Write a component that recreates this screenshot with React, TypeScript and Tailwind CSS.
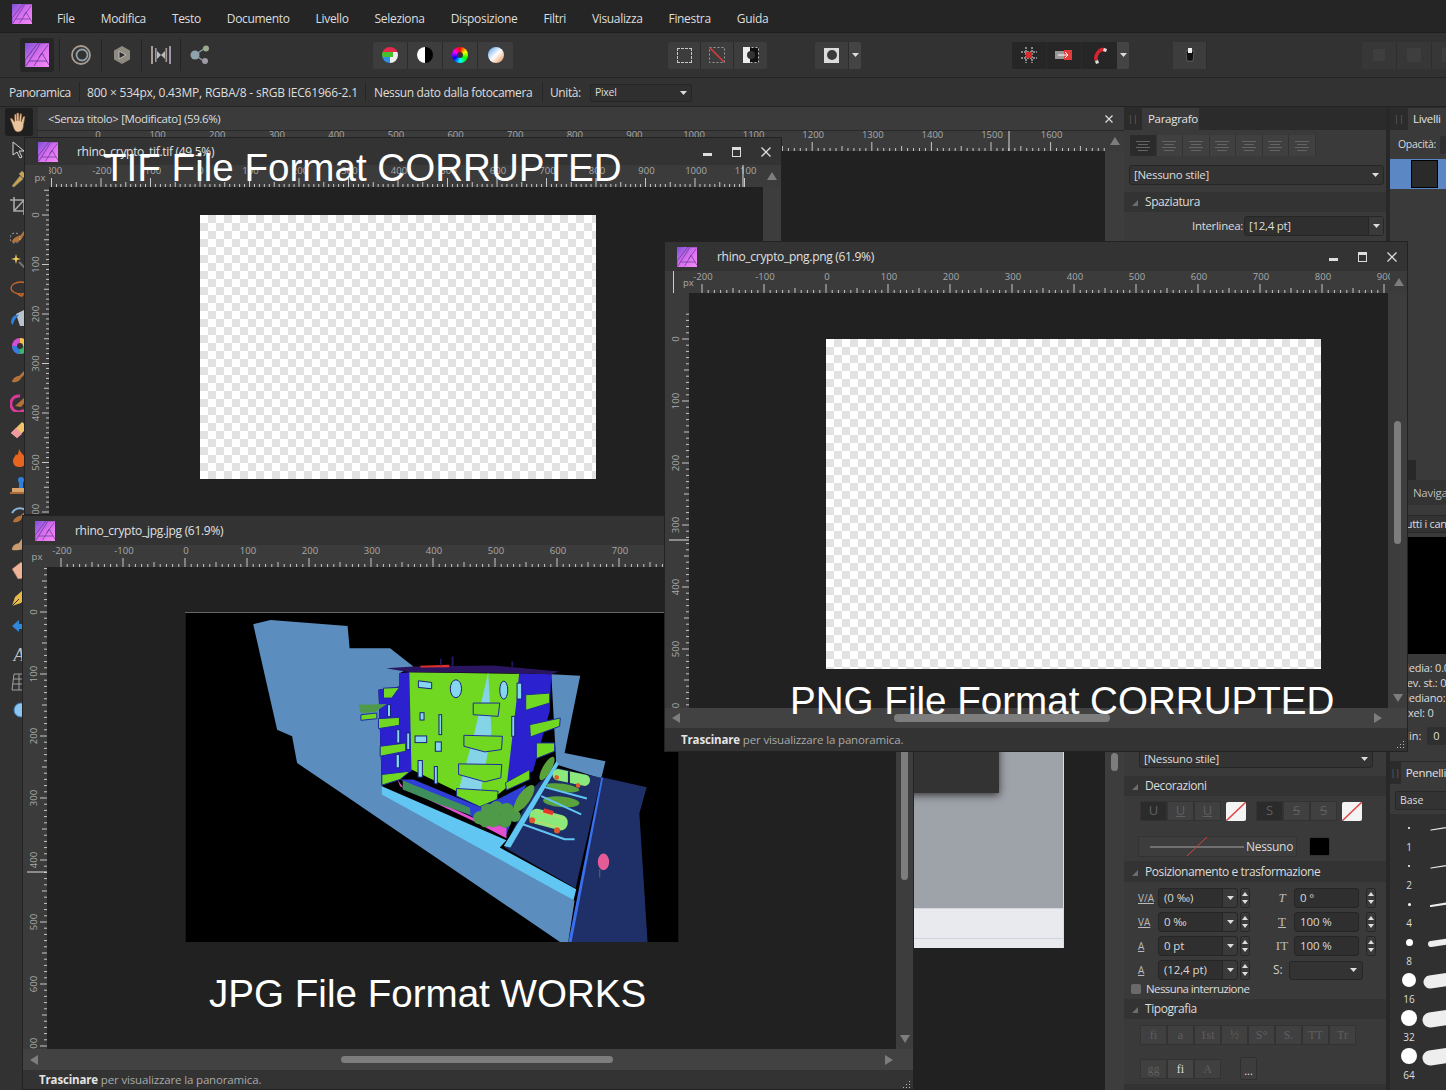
import React from "react";

const menus = ["File", "Modifica", "Testo", "Documento", "Livello", "Seleziona", "Disposizione", "Filtri", "Visualizza", "Finestra", "Guida"];

const Logo = ({ size = 20 }: { size?: number }) => (
  <svg width={size} height={size} viewBox="0 0 24 24">
    <defs>
      <linearGradient id="lg" x1="0" y1="0" x2="1" y2="1">
        <stop offset="0" stopColor="#7b4fd6" />
        <stop offset="0.5" stopColor="#d96ef0" />
        <stop offset="1" stopColor="#f58af7" />
      </linearGradient>
    </defs>
    <rect width="24" height="24" fill="url(#lg)" />
    <path d="M24 0L13 0L0 17V24M1 23L15 1M9 23L17 10L24 22M4 18H22M23 2L14 14" stroke="#4a3080" strokeWidth="0.7" fill="none" />
  </svg>
);

type RulerProps = { size: number; origin: number; zero: number; step: number; from: number; to: number; cursor?: number };

const HRuler = ({ size, origin, zero, step, from, to, cursor }: RulerProps) => {
  const ticks = [];
  for (let v = from; v <= to; v += 10) {
    const x = zero - origin + (v / 100) * step;
    const len = v % 100 === 0 ? 9 : v % 50 === 0 ? 5 : 3;
    ticks.push(<line key={v} x1={x} x2={x} y1={22 - len} y2={22} stroke="#c8c8c8" strokeWidth="1" />);
    if (v % 100 === 0)
      ticks.push(
        <text key={"t" + v} x={x + 1} y={9} fontSize="9.5" fill="#aaa" textAnchor="middle">
          {v}
        </text>
      );
  }
  return (
    <svg width={size} height={22} className="block shrink-0">
      {ticks}
      {cursor !== undefined && <line x1={cursor - origin} x2={cursor - origin} y1={0} y2={22} stroke="#ddd" />}
    </svg>
  );
};

const VRuler = ({ size, origin, zero, step, from, to, cursor }: RulerProps) => {
  const ticks = [];
  for (let v = from; v <= to; v += 10) {
    const y = zero - origin + (v / 100) * step;
    const len = v % 100 === 0 ? 7 : v % 50 === 0 ? 5 : 3;
    ticks.push(<line key={v} y1={y} y2={y} x1={24 - len} x2={24} stroke="#c8c8c8" strokeWidth="1" />);
    if (v % 100 === 0)
      ticks.push(
        <text key={"t" + v} x={0} y={0} transform={`translate(14 ${y}) rotate(-90)`} fontSize="9.5" fill="#aaa" textAnchor="middle">
          {v}
        </text>
      );
  }
  return (
    <svg width={24} height={size} className="block shrink-0">
      {ticks}
      {cursor !== undefined && <line y1={cursor - origin} y2={cursor - origin} x1={4} x2={24} stroke="#ddd" />}
    </svg>
  );
};

const Tri = ({ dir, className = "" }: { dir: "up" | "down" | "left" | "right"; className?: string }) => {
  const pts = { up: "5,1 10,9 0,9", down: "0,1 10,1 5,9", left: "1,5 9,0 9,10", right: "9,5 1,0 1,10" }[dir];
  return (
    <svg width={10} height={10} viewBox="0 0 10 10" className={"shrink-0 " + className}>
      <polygon points={pts} fill="#7d7d7d" />
    </svg>
  );
};

const Caret = () => (
  <svg width={7} height={4} viewBox="0 0 7 4" className="shrink-0">
    <polygon points="0,0 7,0 3.5,4" fill="#ddd" />
  </svg>
);

const WinButtons = () => (
  <div className="flex items-center gap-[20px] ml-auto pr-[10px]">
    <div className="w-[9px] h-[3px] mt-[5px] bg-[#ddd]" />
    <div className="w-[9px] h-[10px] border border-[#ddd] border-t-[3px]" />
    <svg width={10} height={10} viewBox="0 0 10 10">
      <path d="M0.5 0.5L9.5 9.5M9.5 0.5L0.5 9.5" stroke="#ddd" strokeWidth="1.3" />
    </svg>
  </div>
);

const Grip = () => (
  <svg width={9} height={9} viewBox="0 0 9 9" className="shrink-0">
    {[[7, 1], [4, 4], [7, 4], [1, 7], [4, 7], [7, 7]].map(([x, y]) => (
      <rect key={`${x}${y}`} x={x} y={y} width="1" height="1" fill="#bbb" />
    ))}
  </svg>
);

const Checker = ({ className }: { className: string }) => (
  <div className={"shrink-0 bg-[conic-gradient(#e2e2e2_25%,#ffffff_0_50%,#e2e2e2_0_75%,#ffffff_0)] bg-[length:16px_16px] " + className} />
);

const Status = ({ className }: { className: string }) => (
  <div className={"flex items-center shrink-0 bg-[#333333] text-[11.5px] text-[#a9a9a9] tracking-[-0.15px] " + className}>
    <span>
      <b className="font-bold text-[#e4e4e4]">Trascinare</b> per visualizzare la panoramica.
    </span>
    <div className="ml-auto mr-[2px] mt-[10px]">
      <Grip />
    </div>
  </div>
);

const bush = [
  [720, 610, 20], [745, 590, 22], [770, 580, 20], [800, 590, 24], [825, 605, 18], [760, 615, 24], [795, 620, 20], [735, 625, 14],
];

const Building = () => (
  <svg viewBox="-165 -6 1482 990" className="block w-full h-full">
    <rect x="-165" y="-6" width="1482" height="990" fill="#000" />
    <polygon points="38,28 90,15 322,33 328,100 450,100 520,155 478,175 478,215 415,225 425,515 1005,860 985,990 970,990 310,540 170,445 155,365 110,345" fill="#5b8ebf" />
    <polygon points="935,178 1022,183 975,415 1098,440 1085,492 950,450" fill="#5b8ebf" />
    <polygon points="1088,488 1222,518 1200,597 1225,990 992,990" fill="#1f3069" />
    <polygon points="950,460 1085,490 1008,822 795,700 880,520" fill="#1e2f68" />
    <polygon points="1085,490 1091,490 995,990 985,990" fill="#3a70f0" />
    <polygon points="425,515 800,678 780,700 1010,825 1002,858 425,540" fill="#62c6f2" />
    <polygon points="950,440 957,450 812,700 792,695" fill="#62c6f2" />
    <polygon points="480,495 520,495 725,580 860,510 800,660" fill="#2f3ed4" />
    <polygon points="472,495 490,520 600,565 700,610 800,640 800,672 700,620 480,515" fill="#e24fd0" />
    <polygon points="415,225 478,215 478,175 510,172 515,470 425,510" fill="#2b21cf" />
    <polygon points="835,175 935,178 930,290 880,470 790,510" fill="#2b21cf" />
    <polygon points="508,172 838,177 830,260 800,520 725,580 650,530 514,465" fill="#70d820" />
    <polygon points="745,172 700,370 655,530 720,548 755,350" fill="#85d3e6" />
    <polygon points="438,160 520,155 760,152 958,170 935,178 835,175 508,172" fill="#2a1560" />
    <polygon points="540,153 628,150 628,157 542,158" fill="#e0302a" />
    <rect x="635" y="125" width="6" height="28" fill="#2a1560" />
    <rect x="600" y="132" width="5" height="20" fill="#2a1560" />
    <rect x="815" y="140" width="5" height="15" fill="#2a1560" />
    <g fill="#70d820" stroke="#1f2aa0" strokeWidth="3">
      <polygon points="700,265 780,265 775,305 700,300" />
      <polygon points="672,362 788,365 785,405 735,412 672,395" />
      <polygon points="656,448 786,450 783,490 735,502 656,480" />
      <polygon points="650,522 775,530 772,555 720,577 650,545" />
      <polygon points="858,240 930,235 930,265 858,287" />
      <polygon points="870,330 962,310 960,335 872,367" />
      <polygon points="890,385 945,385 945,410 890,432" />
      <polygon points="797,505 870,465 870,495 800,527" />
      <polygon points="430,220 478,218 455,250 430,250" />
      <polygon points="362,300 410,295 410,312 362,317" />
      <polygon points="415,312 478,308 478,332 415,342" />
      <polygon points="420,395 497,385 497,410 420,425" />
      <polygon points="425,480 510,470 480,495 425,512" />
    </g>
    <polygon points="355,270 440,268 405,292 362,296" fill="#4f9a48" />
    <g fill="#86d6f0" stroke="#1b1f80" strokeWidth="3">
      <polygon points="535,198 575,203 575,222 535,218" />
      <ellipse cx="648" cy="222" rx="17" ry="27" />
      <ellipse cx="792" cy="226" rx="12" ry="27" />
      <rect x="540" y="294" width="12" height="22" />
      <rect x="597" y="300" width="8" height="60" />
      <rect x="525" y="364" width="35" height="20" />
      <rect x="586" y="382" width="18" height="28" />
      <rect x="534" y="438" width="13" height="50" />
      <rect x="583" y="456" width="9" height="52" />
      <rect x="832" y="205" width="14" height="48" />
      <rect x="816" y="305" width="9" height="60" />
      <rect x="442" y="270" width="9" height="36" />
      <rect x="470" y="345" width="9" height="40" />
      <rect x="500" y="355" width="9" height="50" />
      <rect x="468" y="420" width="10" height="40" />
    </g>
    <polygon points="488,498 690,580 692,602 600,570 488,525" fill="#3f8f5c" />
    <g fill="#4f9a48">
      {bush.map(([x, y, r]) => (
        <circle key={`${x}${y}`} cx={x} cy={y} r={r} />
      ))}
    </g>
    <ellipse cx="853" cy="552" rx="18" ry="48" transform="rotate(35 853 552)" fill="#5aa33c" />
    <ellipse cx="922" cy="462" rx="13" ry="40" transform="rotate(30 922 462)" fill="#5aa33c" />
    <ellipse cx="970" cy="520" rx="50" ry="12" transform="rotate(8 970 520)" fill="#5aa33c" />
    <ellipse cx="965" cy="562" rx="55" ry="16" transform="rotate(5 965 562)" fill="#5aa33c" />
    <g stroke="#62c6f2" strokeWidth="6" fill="none">
      <path d="M845 628L975 675H1005" />
      <path d="M905 545L1025 600" />
      <path d="M915 518L1042 552" />
    </g>
    <g transform="rotate(15 925 615)">
      <rect x="868" y="592" width="118" height="46" rx="22" fill="#8be87a" />
      <rect x="905" y="586" width="30" height="14" fill="#e0382c" />
      <path d="M880 600H975M880 630H975" stroke="#e8d060" strokeWidth="2" />
      <circle cx="880" cy="630" r="9" fill="#e05a2c" />
      <circle cx="960" cy="640" r="9" fill="#e05a2c" />
    </g>
    <g transform="rotate(12 995 490)">
      <rect x="938" y="472" width="114" height="34" rx="16" fill="#8be87a" />
      <circle cx="952" cy="498" r="7" fill="#e05a2c" />
      <circle cx="1020" cy="508" r="7" fill="#e05a2c" />
    </g>
    <rect x="985" y="470" width="6" height="36" fill="#1a2060" />
    <ellipse cx="1092" cy="743" rx="17" ry="25" fill="#e45c96" />
    <rect x="1080" y="765" width="2" height="25" fill="#596" />
  </svg>
);

type WinProps = { title: string; className: string; logo: number; logoClass: string; buttons?: boolean; titleH: string; children: React.ReactNode };

const DocWindow = ({ title, className, logo, logoClass, buttons, titleH, children }: WinProps) => (
  <div className={"absolute flex flex-col bg-[#3b3b3b] border border-[#222] overflow-hidden " + className}>
    <div className={"flex items-center shrink-0 bg-[#333333] text-[12px] text-[#e0e0e0] tracking-[-0.3px] " + titleH}>
      <div className={logoClass}>
        <Logo size={logo} />
      </div>
      <span>{title}</span>
      {buttons && <WinButtons />}
    </div>
    {children}
  </div>
);

const ToolIcon = ({ children }: { children: React.ReactNode }) => (
  <div className="flex items-center justify-center h-[28px] shrink-0">
    <svg width={18} height={20} viewBox="0 0 18 20">
      {children}
    </svg>
  </div>
);

const tools: React.ReactNode[] = [
  <path key="a" d="M3 2L3 15L7 12L10 18L12 17L9 11H14Z" fill="#2b2b2b" stroke="#d8d8d8" />,
  <path key="b" d="M2 18L10 8L13 11L4 19ZM12 3L16 7L13 10L9 6Z" fill="#c9a24e" stroke="#888" strokeWidth=".5" />,
  <g key="c" stroke="#a8a8a8" strokeWidth="1.6" fill="none"><path d="M4 1V15H18M0 4H14V19M4 15L14 4" /></g>,
  <g key="d"><path d="M2 18C3 13 8 12 10 12L17 3L18 5L12 14C11 17 6 19 2 18Z" fill="#b5713a" /><circle cx="5" cy="14" r="5" fill="none" stroke="#aaa" strokeDasharray="2 2" /></g>,
  <g key="e"><path d="M9 10L18 19" stroke="#777" strokeWidth="2" /><path d="M6 2L7 6L11 7L7 8L6 12L5 8L1 7L5 6Z" fill="#f5cf5a" /></g>,
  <g key="f" stroke="#c9672a" strokeWidth="1.4" fill="none"><ellipse cx="11" cy="8" rx="10" ry="6" /><path d="M8 14C12 18 14 15 12 14" /></g>,
  <g key="g"><path d="M6 6L14 2L18 8V18H10Z" fill="#b8c2cc" /><path d="M1 15C1 9 5 6 9 7L6 10C5 12 3 14 3 17Z" fill="#2f7fd8" /></g>,
  <g key="h"><circle cx="10" cy="10" r="8" fill="#d34fd0" /><path d="M10 10L10 2A8 8 0 0 1 18 10Z" fill="#f2c14a" /><path d="M10 10L18 10A8 8 0 0 1 10 18Z" fill="#3fb56a" /><path d="M10 10L10 18A8 8 0 0 1 2 10Z" fill="#2f7fd8" /><circle cx="10" cy="10" r="3" fill="#333" /></g>,
  <g key="i"><path d="M2 18C3 13 7 12 9 12L14 7L16 9L11 14C10 17 6 19 2 18Z" fill="#b5713a" /><path d="M14 7L18 2L18 6L16 9Z" fill="#d9364a" /></g>,
  <g key="j"><path d="M10 4A8 8 0 1 0 14 18" fill="none" stroke="#d83a9a" strokeWidth="3" /><path d="M5 14L14 6L18 2V7L11 15Z" fill="#b5713a" /></g>,
  <g key="k"><path d="M1 13L12 2L18 7L7 18Z" fill="#f2c26a" /><path d="M1 13L6 8L12 14L7 18Z" fill="#ef9aa0" /></g>,
  <path key="l" d="M9 1C11 6 16 8 16 13C16 17 13 19 9 19C5 19 3 16 3 13C3 10 5 9 6 6C7 8 8 8 9 1Z" fill="#e8651f" />,
  <g key="m"><circle cx="11" cy="4" r="3" fill="#2f7fd8" /><rect x="9" y="6" width="4" height="6" fill="#2f7fd8" /><rect x="2" y="12" width="16" height="4" fill="#d9a36a" /><rect x="0" y="16" width="18" height="2" fill="#a86a3c" /></g>,
  <g key="n"><path d="M2 9C6 2 14 4 16 7" stroke="#8ab4d8" strokeWidth="2" fill="none" /><path d="M3 18C4 13 9 12 10 12L18 5L12 14C11 17 7 19 3 18Z" fill="#b5713a" /></g>,
  <path key="o" d="M2 18C2 13 6 12 9 11L14 4L18 2V14C14 18 8 19 2 18Z" fill="#c89a72" />,
  <path key="p" d="M2 9L11 2L18 8V18L8 19Z" fill="#efb39a" stroke="#7a5a4a" strokeWidth=".5" />,
  <g key="q"><path d="M2 18L5 9L13 2L18 7L11 15Z" fill="#e8b84a" /><path d="M2 18L9 11" stroke="#333" /></g>,
  <path key="r" d="M2 10L9 4V8H18V13H9V16Z" fill="#2f87d8" />,
  <text key="s" x="9" y="17" fontSize="18" textAnchor="middle" fontFamily="Liberation Serif" fontStyle="italic" fill="#c0c0c0">A</text>,
  <path key="t" d="M4 2H14L16 18H2ZM9 2V18M3 7H15M3 12H16" stroke="#a0a0a0" fill="none" />,
  <circle key="u" cx="11" cy="10" r="7" fill="#8cc6f0" stroke="#3e7fb8" />,
];

// width comes in through className, every button sets its own
const ToolbarBtn = ({ children, dark, className = "" }: { children: React.ReactNode; dark?: boolean; className?: string }) => (
  <div className={"flex items-center justify-center shrink-0 h-[27px] border-r border-[#2c2c2c] " + (dark ? "bg-[#262626] " : "bg-[#3d3d3d] ") + className}>{children}</div>
);

const Swatch = () => (
  <svg width={20} height={19} viewBox="0 0 20 19" className="shrink-0 rounded-[2px]">
    <rect width="20" height="19" fill="#f4f4f4" />
    <path d="M0 19L20 0" stroke="#e24a4a" strokeWidth="1.6" />
  </svg>
);

const SectionHead = ({ title, className = "" }: { title: string; className?: string }) => (
  <div className={"flex items-center bg-[#333333] pl-[8px] gap-[7px] text-[12px] text-[#dcdcdc] tracking-[-0.42px] " + className}>
    <svg width={6} height={6} viewBox="0 0 6 6" className="mt-[2px]">
      <polygon points="6,0 6,6 0,6" fill="#6d6d6d" />
    </svg>
    <span>{title}</span>
  </div>
);

const FieldBtn = ({ label, wide }: { label: string; wide?: boolean }) => (
  <div className={"flex items-center h-[20px] rounded-[3px] bg-[#2f2f2f] border border-[#262626] text-[11.5px] text-[#d8d8d8] pl-[5px] " + (wide ? "w-[65px]" : "w-[80px]")}>
    <span className="tracking-[-0.1px]">{label}</span>
    {!wide && (
      <div className="ml-auto flex items-center justify-center w-[15px] h-full bg-[#3a3a3a] border-l border-[#262626] rounded-r-[3px]">
        <Caret />
      </div>
    )}
  </div>
);

const Stepper = () => (
  <svg width={10} height={20} viewBox="0 0 10 20" className="shrink-0">
    <rect x="0.5" y="0.5" width="9" height="19" rx="2" fill="#3a3a3a" stroke="#262626" />
    <polygon points="5,4 8,8 2,8" fill="#ddd" />
    <polygon points="5,16 8,12 2,12" fill="#ddd" />
  </svg>
);

const FaintBtn = ({ label, active, dark }: { label: string; active?: boolean; dark?: boolean }) => (
  <div
    className={
      "flex items-center justify-center w-[27px] h-[20px] border border-[#333] font-['Liberation_Serif',serif] text-[12px] " +
      (dark ? "bg-[#2b2b2b] text-[#555] " : active ? "bg-[#444] text-[#ddd] " : "bg-[#404040] text-[#5f5f5f] ")
    }
  >
    {label}
  </div>
);

const rows: [string, string, string, string, string][] = [
  ["V/A", "(0 ‰)", "T", "0 °", "italic"],
  ["VA", "0 ‰", "T", "100 %", "underline"],
  ["A", "0 pt", "IT", "100 %", "not-italic"],
];

const brushes = [
  { n: "1", s: 1.2, x: 10, dot: "w-[2px] h-[2px]" },
  { n: "2", s: 1.2, x: 10, dot: "w-[2px] h-[2px]" },
  { n: "4", s: 2.2, x: 10, dot: "w-[3px] h-[3px]" },
  { n: "8", s: 6, x: 10, dot: "w-[7px] h-[7px]" },
  { n: "16", s: 13, x: 9, dot: "w-[14px] h-[14px]" },
  { n: "32", s: 15, x: 9, dot: "w-[16px] h-[16px]" },
  { n: "64", s: 15, x: 9, dot: "w-[16px] h-[16px]" },
];

export default function App() {
  return (
    <div className="relative w-[1446px] h-[1090px] overflow-hidden bg-[#2e2e2e] font-['Open_Sans',sans-serif] select-none">
      {/* menu */}
      <div className="flex items-center h-[33px] bg-[#252525] border-b border-[#1e1e1e]">
        <div className="ml-[12px] mr-[25px] -mt-[5px]">
          <Logo size={20} />
        </div>
        <div className="flex gap-[26px] mt-[5px] text-[12px] text-[#dedede] tracking-[-0.33px]">
          {menus.map((m) => (
            <span key={m}>{m}</span>
          ))}
        </div>
      </div>

      {/* toolbar */}
      <div className="flex items-center h-[45px] bg-[#323232] border-b border-[#232323] overflow-hidden">
        <div className="flex items-center justify-center shrink-0 ml-[20px] w-[34px] h-[34px] rounded-[3px] bg-[#262626]">
          <Logo size={24} />
        </div>
        <div className="ml-[5px] w-px h-[32px] shrink-0 bg-[#242424]" />
        <div className="flex items-center justify-center shrink-0 w-[41px]">
          <svg width={20} height={20} viewBox="0 0 20 20">
            <circle cx="10" cy="10" r="9" fill="none" stroke="#a89a90" strokeWidth="1.8" />
            <circle cx="11" cy="10" r="5.5" fill="none" stroke="#8fa0a8" strokeWidth="1.8" />
          </svg>
        </div>
        <div className="w-px h-[32px] shrink-0 bg-[#242424]" />
        <div className="flex items-center justify-center shrink-0 w-[39px]">
          <svg width={20} height={20} viewBox="0 0 20 20">
            <polygon points="10,1 18,5.5 18,14.5 10,19 2,14.5 2,5.5" fill="#8e8a80" />
            <polygon points="7,6 14,10 7,14" fill="#2f2f2f" stroke="#bbb" />
          </svg>
        </div>
        <div className="w-px h-[32px] shrink-0 bg-[#242424]" />
        <div className="flex items-center justify-center shrink-0 w-[38px]">
          <svg width={20} height={20} viewBox="0 0 20 20">
            <rect x="0" y="1" width="2" height="18" fill="#a99" />
            <rect x="4" y="3" width="1.6" height="14" fill="#99a" />
            <rect x="14.5" y="3" width="1.6" height="14" fill="#a99" />
            <rect x="18" y="1" width="2" height="18" fill="#99a" />
            <polygon points="6,6 10,10 6,14" fill="#bbb" />
            <polygon points="14,6 10,10 14,14" fill="#bbb" />
          </svg>
        </div>
        <div className="w-px h-[32px] shrink-0 bg-[#242424]" />
        <div className="flex items-center justify-center shrink-0 w-[38px]">
          <svg width={20} height={20} viewBox="0 0 20 20">
            <path d="M5 10L15 3M5 10L15 17" stroke="#8b9a9c" strokeWidth="1.5" />
            <circle cx="5" cy="10" r="4.5" fill="#8fa3ad" />
            <circle cx="16" cy="3.5" r="3" fill="#9aa88c" />
            <circle cx="15" cy="16" r="3" fill="#a09aa4" />
          </svg>
        </div>

        <div className="flex items-center shrink-0 ml-[154px] rounded-[2px] overflow-hidden">
          <ToolbarBtn className="w-[35px]">
            <svg width={16} height={16} viewBox="0 0 16 16">
              <clipPath id="c1"><circle cx="8" cy="8" r="8" /></clipPath>
              <g clipPath="url(#c1)">
                <rect width="16" height="5" fill="#e8294c" />
                <rect y="5" width="11" height="5" fill="#45c12e" />
                <rect x="11" y="5" width="5" height="5" fill="#eee" />
                <rect y="10" width="8" height="6" fill="#2d8fe6" />
                <rect x="8" y="10" width="8" height="6" fill="#eee" />
              </g>
            </svg>
          </ToolbarBtn>
          <ToolbarBtn className="w-[35px]">
            <svg width={16} height={16} viewBox="0 0 16 16">
              <circle cx="8" cy="8" r="8" fill="#000" />
              <path d="M8 0A8 8 0 0 0 8 16Z" fill="#fff" />
            </svg>
          </ToolbarBtn>
          <ToolbarBtn className="w-[35px]">
            <div className="w-[16px] h-[16px] rounded-full bg-[conic-gradient(#ff0000,#ffff00,#00ff00,#00ffff,#0000ff,#ff00ff,#ff0000)] flex items-center justify-center">
              <div className="w-[6px] h-[6px] rounded-full bg-[#333]" />
            </div>
          </ToolbarBtn>
          <ToolbarBtn className="w-[35px] border-r-0">
            <div className="w-[16px] h-[16px] rounded-full bg-[linear-gradient(135deg,#4f9be8,#ffffff_50%,#e88a4a)]" />
          </ToolbarBtn>
        </div>

        <div className="flex items-center shrink-0 ml-[155px] rounded-[2px] overflow-hidden">
          <ToolbarBtn className="w-[33px]">
            <div className="w-[15px] h-[15px] border border-dashed border-[#c8c8c8]" />
          </ToolbarBtn>
          <ToolbarBtn className="w-[33px]">
            <svg width={16} height={16} viewBox="0 0 16 16">
              <rect x="0.5" y="0.5" width="15" height="15" fill="none" stroke="#999" strokeDasharray="2 2" />
              <path d="M1 1L15 15" stroke="#e53a3a" strokeWidth="1.4" />
            </svg>
          </ToolbarBtn>
          <ToolbarBtn className="w-[33px] border-r-0">
            <svg width={16} height={16} viewBox="0 0 16 16">
              <rect x="0.5" y="0.5" width="15" height="15" fill="#111" stroke="#bbb" strokeDasharray="2 2" />
              <rect x="0" y="0" width="7" height="16" fill="#eee" />
              <circle cx="8" cy="8" r="4" fill="#333" />
            </svg>
          </ToolbarBtn>
        </div>

        <div className="flex items-center shrink-0 ml-[48px] rounded-[2px] overflow-hidden">
          <ToolbarBtn className="w-[34px]">
            <div className="flex items-center justify-center w-[15px] h-[15px] bg-[#dcdcdc]">
              <div className="w-[10px] h-[10px] rounded-full bg-[#3a3a3a]" />
            </div>
          </ToolbarBtn>
          <div className="flex items-center justify-center w-[12px] h-[27px] bg-[#444]">
            <Caret />
          </div>
        </div>

        <div className="flex items-center shrink-0 ml-[151px] rounded-[2px] overflow-hidden">
          <ToolbarBtn dark className="w-[35px]">
            <svg width={16} height={16} viewBox="0 0 16 16">
              <path d="M0 5H16M0 11H16M5 0V16M11 0V16" stroke="#888" strokeWidth="2" strokeDasharray="2 1" />
              <rect x="5" y="5" width="6" height="6" fill="#d82c2c" />
            </svg>
          </ToolbarBtn>
          <ToolbarBtn dark className="w-[35px]">
            <svg width={18} height={12} viewBox="0 0 18 12">
              <rect x="0" y="2" width="9" height="8" fill="#999" />
              <rect x="9" y="1" width="8" height="10" fill="#e53a3a" />
              <path d="M3 6H13M10 3L13 6L10 9" stroke="#fff" strokeWidth="1" fill="none" />
            </svg>
          </ToolbarBtn>
          <ToolbarBtn dark className="w-[35px] border-r-0">
            <svg width={18} height={18} viewBox="0 0 18 18">
              <path d="M4 15C1 11 6 3 10 2C14 1 16 3 15 6C13 5 12 5 10 6C8 7 6 11 7 14Z" fill="#d9232f" />
              <path d="M4 15L7 14L8 17L5 18Z" fill="#ddd" />
              <path d="M15 6L12 5L13 2L16 3Z" fill="#ddd" />
            </svg>
          </ToolbarBtn>
          <div className="flex items-center justify-center w-[12px] h-[27px] bg-[#444]">
            <Caret />
          </div>
        </div>

        <ToolbarBtn className="ml-[44px] w-[34px]">
          <svg width={10} height={18} viewBox="0 0 10 18">
            <path d="M1 5H9L8 15H2Z" fill="#111" stroke="#888" strokeWidth=".5" />
            <rect x="3" y="2" width="4" height="5" fill="#eee" />
          </svg>
        </ToolbarBtn>

        <div className="flex items-center shrink-0 ml-[155px] opacity-50">
          <ToolbarBtn className="w-[35px]"><div className="w-[12px] h-[12px] bg-[#4b4b4b]" /></ToolbarBtn>
          <ToolbarBtn className="w-[35px]"><div className="w-[14px] h-[14px] bg-[#4b4b4b]" /></ToolbarBtn>
          <ToolbarBtn className="w-[35px]"><div className="w-[14px] h-[14px] bg-[#4b4b4b]" /></ToolbarBtn>
        </div>
      </div>

      {/* context */}
      <div className="flex items-center h-[29px] bg-[#323232] border-b border-[#232323] text-[12px] text-[#dedede] whitespace-nowrap">
        <span className="ml-[9px] w-[62px] pt-[1px] tracking-[-0.5px]">Panoramica</span>
        <div className="ml-[8px] w-px h-[20px] bg-[#262626]" />
        <span className="ml-[7px] w-[270px] pt-[1px] tracking-[-0.2px]">800 × 534px, 0.43MP, RGBA/8 - sRGB IEC61966-2.1</span>
        <div className="ml-[8px] w-px h-[20px] bg-[#262626]" />
        <span className="ml-[8px] w-[160px] pt-[1px] tracking-[-0.35px]">Nessun dato dalla fotocamera</span>
        <div className="ml-[8px] w-px h-[20px] bg-[#262626]" />
        <span className="ml-[7px] w-[40px] pt-[1px] tracking-[-0.4px]">Unità:</span>
        <div className="flex items-center justify-between w-[102px] h-[18px] mt-[2px] rounded-[2px] bg-[#2f2f2f] border border-[#252525] px-[4px] text-[10.5px] tracking-[-0.3px]">
          <span>Pixel</span>
          <Caret />
        </div>
      </div>

      {/* main */}
      <div className="flex h-[983px]">
        <div className="flex flex-col w-[38px] shrink-0 bg-[#323232]">
          <div className="flex items-center justify-center ml-[5px] w-[28px] h-[28px] rounded-[3px] bg-[#1f1f1f] mt-[1px]">
            <svg width={22} height={22} viewBox="0 0 20 20">
              <path d="M4 12L2 7L3.5 6.5L6 10V3H7.5L8 9V1.8H9.8L10 9L11 2.5H12.5L12 10L14 5H15.5L14 13C14 17 12 19 9 19C6 19 5 15 4 12Z" fill="#eac49c" stroke="#7a5230" strokeWidth=".5" />
            </svg>
          </div>
          {tools.map((t, i) => (
            <ToolIcon key={i}>{t}</ToolIcon>
          ))}
        </div>

        {/* background document */}
        <div className="flex flex-col w-[1086px] shrink-0">
          <div className="flex items-center h-[24px] shrink-0 bg-[#3b3b3b] border-b border-[#282828] text-[11.5px] text-[#dedede] tracking-[-0.36px] pl-[10px] pr-[11px]">
            <span>{"<Senza titolo> [Modificato] (59.6%)"}</span>
            <svg width={8} height={8} viewBox="0 0 8 8" className="ml-auto">
              <path d="M0.5 0.5L7.5 7.5M7.5 0.5L0.5 7.5" stroke="#ddd" strokeWidth="1.2" />
            </svg>
          </div>
          <div className="flex h-[20px] shrink-0 bg-[#3b3b3b] overflow-hidden">
            <div className="-mt-[2px]">
              <HRuler size={1067} origin={38} zero={97} step={59.6} from={-50} to={1690} cursor={1009} />
            </div>
            <div className="flex justify-center pt-[5px] w-[19px]">
              <Tri dir="up" />
            </div>
          </div>
          <div className="flex flex-1 min-h-0">
            <div className="relative flex-1 bg-[#212121] overflow-hidden">
              <div className="ml-[700px] mt-[420px] w-[326px] h-[377px] flex flex-col bg-[#9ea2a9] border-r border-[#d9dce6]">
                <div className="w-[261px] h-[222px] bg-[#333] shadow-[0_2px_8px_#333]" />
                <div className="mt-auto h-[40px] bg-[#e9eaee] border-t border-[#d3d6e0] flex flex-col">
                  <div className="mt-[29px] h-px bg-[#cfd3e2]" />
                </div>
              </div>
            </div>
            <div className="w-[19px] bg-[#3d3d3d] pl-[6px]">
              <div className="w-[7px] h-[18px] mt-[602px] rounded-[4px] bg-[#7d7d7d]" />
            </div>
          </div>
        </div>

        {/* paragraph panel */}
        <div className="flex flex-col w-[262px] shrink-0 bg-[#3a3a3a]">
          <div className="flex items-end h-[23px] bg-[#2b2b2b] shrink-0">
            <div className="flex items-center justify-center w-[18px] h-[22px] text-[#666] text-[9px]">||</div>
            <div className="flex items-center h-[22px] w-[57px] bg-[#3a3a3a] pl-[6px] pb-[1px] text-[11.5px] text-[#e4e4e4] tracking-[-0.3px]">Paragrafo</div>
          </div>
          <div className="flex ml-[6px] mt-[5px]">
            {[0, 1, 2, 3, 4, 5, 6].map((i) => (
              <div key={i} className={"flex flex-col justify-center gap-[2px] items-center w-[26.5px] h-[21px] border-r border-[#333] " + (i === 0 ? "bg-[#2b2b2b]" : "bg-[#404040]")}>
                <div className="w-[14px] h-px bg-[#656565]" />
                <div className="w-[10px] h-px bg-[#656565]" />
                <div className="w-[14px] h-px bg-[#656565]" />
                <div className="w-[10px] h-px bg-[#656565]" />
              </div>
            ))}
          </div>
          <div className="flex items-center justify-between ml-[5px] mt-[9px] w-[255px] h-[20px] rounded-[3px] bg-[#333] border border-[#262626] px-[4px] text-[11.5px] text-[#dcdcdc] tracking-[-0.3px]">
            <span>[Nessuno stile]</span>
            <Caret />
          </div>
          <SectionHead title="Spaziatura" className="mt-[7px] h-[20px]" />
          <div className="flex items-center mt-[4px] text-[11.5px] text-[#dcdcdc] tracking-[-0.3px]">
            <span className="ml-[68px] w-[52px]">Interlinea:</span>
            <div className="flex items-center w-[140px] h-[20px] rounded-[3px] bg-[#2f2f2f] border border-[#262626] pl-[4px]">
              <span>[12,4 pt]</span>
              <div className="ml-auto flex items-center justify-center w-[15px] h-full bg-[#3a3a3a] border-l border-[#262626]">
                <Caret />
              </div>
            </div>
          </div>

          {/* below the floating png window */}
          <div className="flex items-center justify-between ml-[15px] mt-[513px] w-[234px] h-[20px] rounded-[3px] bg-[#333] border border-[#262626] px-[4px] text-[11.5px] text-[#dcdcdc] tracking-[-0.3px]">
            <span>[Nessuno stile]</span>
            <Caret />
          </div>
          <SectionHead title="Decorazioni" className="mt-[8px] h-[20px]" />
          <div className="flex items-center ml-[16px] mt-[5px]">
            {["U", "U", "U"].map((l, i) => (
              <div key={i} className={"flex items-center justify-center w-[27px] h-[20px] border border-[#333] text-[13px] text-[#5f5f5f] " + (i === 0 ? "bg-[#2b2b2b]" : "bg-[#404040] underline")}>{l}</div>
            ))}
            <div className="ml-[5px]"><Swatch /></div>
            <div className="ml-[10px] flex">
              {["S", "S", "S"].map((l, i) => (
                <div key={i} className={"flex items-center justify-center w-[27px] h-[20px] border border-[#333] text-[13px] text-[#5f5f5f] " + (i === 0 ? "bg-[#2b2b2b]" : "bg-[#404040] line-through")}>{l}</div>
              ))}
            </div>
            <div className="ml-[5px]"><Swatch /></div>
          </div>
          <div className="flex items-center ml-[14px] mt-[15px]">
            <div className="flex items-center w-[159px] h-[21px] rounded-[2px] bg-[#3d3d3d] border border-[#333] text-[12px] text-[#dcdcdc]">
              <svg width={100} height={19} viewBox="0 0 100 19" className="ml-[8px] shrink-0">
                <path d="M3 10H97" stroke="#a5a5a5" />
                <path d="M40 19L60 0" stroke="#d94040" />
              </svg>
              <span className="tracking-[-0.3px] -ml-[1px]">Nessuno</span>
            </div>
            <div className="ml-[12px] w-[21px] h-[19px] rounded-[2px] bg-black border border-[#333]" />
          </div>
          <SectionHead title="Posizionamento e trasformazione" className="mt-[4px] h-[21px]" />
          <div className="flex flex-col gap-[4px] mt-[6px]">
            {rows.map((r, i) => (
              <div key={i} className="flex items-center">
                <span className="w-[34px] pl-[14px] text-[10px] text-[#bbb] underline decoration-[#bbb]">{r[0]}</span>
                <FieldBtn label={r[1]} />
                <div className="ml-[2px]"><Stepper /></div>
                <span className={"ml-[20px] w-[24px] text-center font-['Liberation_Serif',serif] text-[13px] text-[#bbb] " + r[4]}>{r[2]}</span>
                <FieldBtn label={r[3]} wide />
                <div className="ml-[7px]"><Stepper /></div>
              </div>
            ))}
            <div className="flex items-center">
              <span className="w-[34px] pl-[14px] text-[10px] text-[#bbb] underline">A</span>
              <FieldBtn label="(12,4 pt)" />
              <div className="ml-[2px]"><Stepper /></div>
              <span className="ml-[23px] w-[16px] text-[12px] text-[#ccc]">S:</span>
              <div className="flex items-center justify-end w-[74px] h-[19px] rounded-[3px] bg-[#333] border border-[#262626] pr-[5px]">
                <Caret />
              </div>
            </div>
          </div>
          <div className="flex items-center ml-[7px] mt-[0px] text-[11.5px] text-[#dcdcdc] tracking-[-0.6px]">
            <div className="w-[10px] h-[10px] rounded-[2px] bg-[#6a6a6a] mr-[5px]" />
            Nessuna interruzione
          </div>
          <SectionHead title="Tipografia" className="mt-[2px] h-[20px]" />
          <div className="flex ml-[16px] mt-[6px]">
            {["fi", "a", "1st", "½", "S°", "S.", "TT", "Tr"].map((l, i) => (
              <FaintBtn key={i} label={l} />
            ))}
          </div>
          <div className="flex items-center ml-[16px] mt-[12px]">
            <FaintBtn label="gg" />
            <FaintBtn label="fi" active />
            <FaintBtn label="A" />
            <div className="flex items-end justify-center ml-[19px] w-[17px] h-[23px] rounded-[2px] bg-[#3d3d3d] border border-[#2f2f2f] text-[11px] leading-[16px] text-[#ddd]">...</div>
          </div>
          <div className="mt-[4px] h-[6px] bg-[#333]" />
        </div>

        <div className="w-[4px] shrink-0 bg-[#282828]" />

        {/* right column */}
        <div className="flex flex-col flex-1 min-w-0 bg-[#3a3a3a] overflow-hidden">
          <div className="flex items-end h-[23px] bg-[#2b2b2b] shrink-0">
            <div className="flex items-center justify-center w-[18px] h-[22px] text-[#666] text-[9px]">||</div>
            <div className="flex items-center h-[22px] flex-1 bg-[#3a3a3a] pl-[5px] pb-[1px] text-[11.5px] text-[#e4e4e4] tracking-[-0.3px]">Livelli</div>
          </div>
          <div className="flex items-center h-[29px] pl-[8px] pt-[1px] text-[10.5px] text-[#d8d8d8] tracking-[-0.3px] shrink-0">
            <span>Opacità:</span>
            <div className="ml-[4px] w-[20px] h-[18px] rounded-[2px] bg-[#2f2f2f]" />
          </div>
          <div className="flex items-center h-[30px] bg-[#5b87c5] shrink-0">
            <div className="ml-[21px] w-[27px] h-[28px] bg-[#2a2a2a] border border-black" />
          </div>
          <div className="h-[271px] shrink-0" />
          <div className="ml-[18px] w-[8px] h-[20px] bg-[#282828] shrink-0" />
          <div className="flex items-center h-[25px] bg-[#333] pl-[23px] text-[11.5px] text-[#bcbcbc] tracking-[-0.3px] shrink-0">Navigatore</div>
          <div className="flex items-center ml-[6px] mt-[10px] w-[60px] h-[18px] rounded-[2px] bg-[#333] border border-[#282828] pl-[3px] text-[11px] text-[#ddd] whitespace-nowrap tracking-[-0.3px] shrink-0">Tutti i canali</div>
          <div className="mt-[4px] h-[117px] bg-black shrink-0" />
          <div className="flex flex-col mt-[6px] pl-[9px] text-[11px] leading-[15px] text-[#ddd] tracking-[-0.2px] whitespace-nowrap shrink-0">
            <span>Media: 0.0</span>
            <span>Dev. st.: 0</span>
            <span>Mediano: 0</span>
            <span>Pixel: 0</span>
          </div>
          <div className="flex items-center mt-[7px] pl-[9px] text-[11px] text-[#ddd] shrink-0 whitespace-nowrap">
            <span>Min:</span>
            <span className="ml-[6px] flex items-center h-[18px] w-[40px] rounded-[2px] bg-[#2f2f2f] pl-[6px]">0</span>
          </div>
          <div className="h-[16px] shrink-0" />
          <div className="flex items-end h-[23px] bg-[#2b2b2b] shrink-0">
            <div className="flex items-center justify-center w-[18px] h-[22px] text-[#666] text-[9px]">||</div>
            <div className="flex items-center h-[22px] flex-1 bg-[#3a3a3a] pl-[5px] text-[11.5px] text-[#e4e4e4] tracking-[-0.3px]">Pennelli</div>
          </div>
          <div className="flex items-center ml-[5px] mt-[7px] h-[19px] w-[70px] rounded-[2px] bg-[#333] border border-[#282828] pl-[4px] text-[10.5px] text-[#ddd] shrink-0">Base</div>
          <div className="flex flex-col mt-[4px] bg-[#303030] flex-1 pt-[4px]">
            {brushes.map((b) => (
              <div key={b.n} className="flex h-[38px] shrink-0">
                <div className="flex flex-col items-center w-[38px] shrink-0">
                  <div className="flex items-center justify-center h-[20px]">
                    <div className={"rounded-full bg-white " + b.dot} />
                  </div>
                  <span className="text-[10px] leading-[16px] text-[#ddd] mt-[1px]">{b.n}</span>
                </div>
                <svg width={30} height={24} viewBox="0 0 30 24" className="shrink-0 -ml-[7px]">
                  <path d={`M${b.x} 12L36 8`} stroke="#eee" strokeWidth={b.s} strokeLinecap="round" />
                </svg>
              </div>
            ))}
          </div>
        </div>
      </div>

      {/* floating windows */}
      <DocWindow title="rhino_crypto_tif.tif (49.5%)" className="left-[24px] top-[137px] w-[758px] h-[378px]" logo={20} logoClass="ml-[13px] mr-[19px]" titleH="h-[27px]" buttons>
        <div className="flex shrink-0 h-[22px]">
          <div className="flex items-center justify-center w-[24px] shrink-0 pl-[6px] pt-[4px] text-[9.5px] text-[#aaa]">px</div>
          <HRuler size={714} origin={49} zero={200} step={49.5} from={-300} to={1100} cursor={743} />
          <div className="flex justify-center pt-[6px] w-[18px]">
            <Tri dir="up" />
          </div>
        </div>
        <div className="flex flex-1 min-h-0">
          <VRuler size={340} origin={187} zero={215} step={49.5} from={-50} to={650} />
          <div className="flex-1 bg-[#212121] pl-[151px] pt-[28px]">
            <Checker className="w-[396px] h-[264px]" />
          </div>
          <div className="w-[18px] bg-[#3d3d3d]" />
        </div>
      </DocWindow>

      <DocWindow title="rhino_crypto_jpg.jpg (61.9%)" className="left-[22px] top-[515px] w-[892px] h-[575px]" logo={20} logoClass="ml-[12px] mr-[20px]" titleH="h-[29px]">
        <div className="flex shrink-0 h-[22px]">
          <div className="flex items-center justify-center w-[24px] shrink-0 pl-[4px] pt-[3px] text-[9.5px] text-[#aaa]">px</div>
          <HRuler size={850} origin={47} zero={185} step={62} from={-200} to={1100} />
          <div className="w-[17px]" />
        </div>
        <div className="flex flex-1 min-h-0">
          <VRuler size={482} origin={567} zero={612} step={62} from={-70} to={700} cursor={872} />
          <div className="flex-1 bg-[#212121] pl-[138px] pt-[45px]">
            <div className="w-[494px] h-[330px] border-t border-[#666]">
              <Building />
            </div>
          </div>
          <div className="flex flex-col items-center w-[17px] bg-[#3d3d3d]">
            <div className="w-[7px] h-[313px] rounded-[4px] bg-[#7d7d7d]" />
            <Tri dir="down" className="mt-auto mb-[5px]" />
          </div>
        </div>
        <div className="flex items-center h-[21px] shrink-0 bg-[#424242] pl-[6px] pr-[19px]">
          <Tri dir="left" />
          <div className="ml-[302px] w-[272px] h-[7px] rounded-[4px] bg-[#7d7d7d]" />
          <Tri dir="right" className="ml-auto" />
        </div>
        <Status className="h-[19px] pl-[16px]" />
      </DocWindow>

      <DocWindow title="rhino_crypto_png.png (61.9%)" className="left-[664px] top-[241px] w-[744px] h-[511px]" logo={20} logoClass="ml-[12px] mr-[20px]" titleH="h-[29px]" buttons>
        <div className="flex shrink-0 h-[22px]">
          <div className="flex items-center w-[24px] shrink-0 pl-[9px] pt-[3px] text-[9.5px] text-[#aaa] border-l border-[#ccc] ml-[8px] -mr-[8px]">px</div>
          <HRuler size={701} origin={689} zero={826} step={62} from={-200} to={900} />
          <div className="flex justify-center pt-[6px] w-[19px]">
            <Tri dir="up" />
          </div>
        </div>
        <div className="flex flex-1 min-h-0">
          <VRuler size={415} origin={293} zero={339} step={62} from={-40} to={600} cursor={540} />
          <div className="flex-1 bg-[#212121] pl-[137px] pt-[46px]">
            <Checker className="w-[495px] h-[330px]" />
          </div>
          <div className="flex flex-col items-center w-[19px] bg-[#3d3d3d]">
            <div className="w-[7px] h-[123px] mt-[128px] rounded-[4px] bg-[#7d7d7d]" />
            <Tri dir="down" className="mt-auto mb-[5px]" />
          </div>
        </div>
        <div className="flex items-center h-[20px] shrink-0 bg-[#424242] pl-[6px] pr-[24px]">
          <Tri dir="left" />
          <div className="ml-[213px] w-[216px] h-[8px] rounded-[4px] bg-[#7d7d7d]" />
          <Tri dir="right" className="ml-auto" />
        </div>
        <Status className="h-[23px] pl-[16px]" />
      </DocWindow>

      {/* caption text added over the windows */}
      <div className="absolute left-[103px] top-[145px] text-[38.6px] leading-[46px] text-white whitespace-nowrap font-['Liberation_Sans',sans-serif]">TIF File Format CORRUPTED</div>
      <div className="absolute left-[790px] top-[678px] text-[38.6px] leading-[46px] text-white whitespace-nowrap font-['Liberation_Sans',sans-serif]">PNG File Format CORRUPTED</div>
      <div className="absolute left-[209px] top-[971px] text-[38.6px] leading-[46px] text-white whitespace-nowrap font-['Liberation_Sans',sans-serif]">JPG File Format WORKS</div>
    </div>
  );
}
